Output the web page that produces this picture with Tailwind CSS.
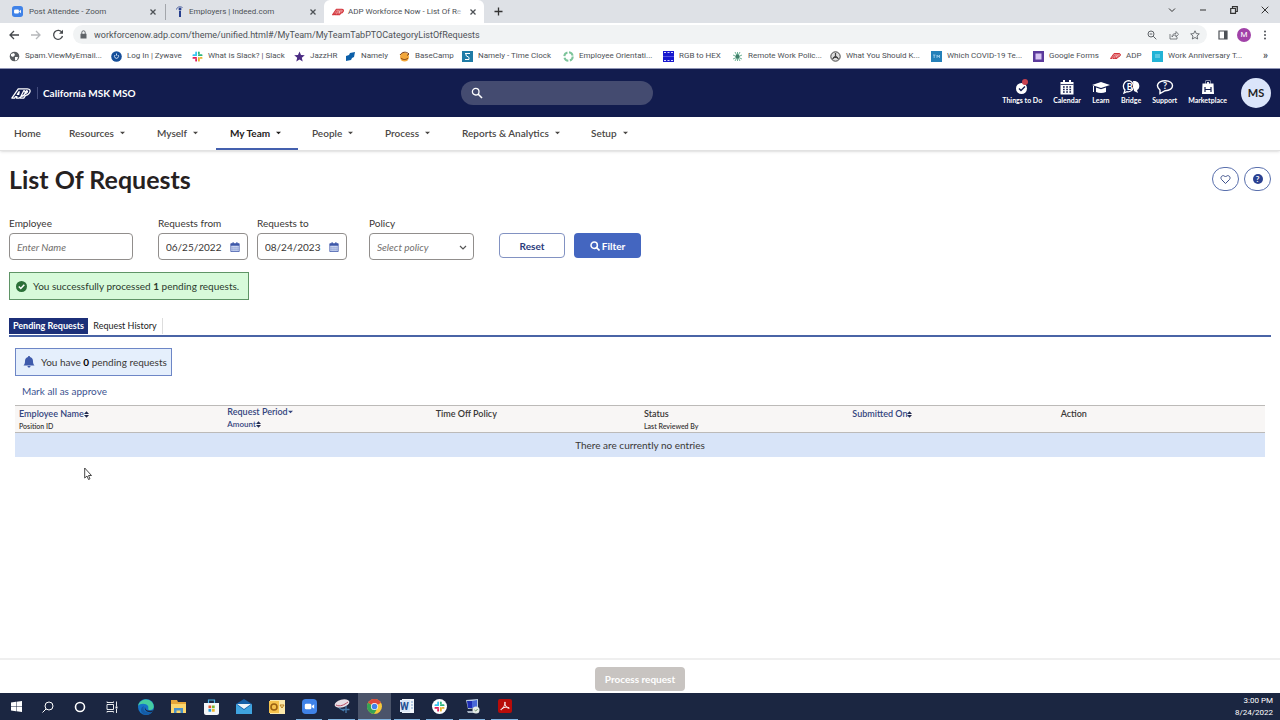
<!DOCTYPE html>
<html lang="en">
<head>
  <meta charset="UTF-8" />
  <meta name="viewport" content="width=device-width, initial-scale=1" />
  <title>ADP Workforce Now - List Of Requests</title>
  <script src="https://cdn.jsdelivr.net/npm/@tailwindcss/browser@4"></script>
</head>
<body class="min-h-screen flex flex-col bg-white font-['Lato',sans-serif] text-[10px] leading-3 text-[#3a3735]">

  <!-- Shared symbols -->
  <svg class="hidden">
    <symbol id="x" viewBox="0 0 8 8"><path d="M1.500 1.500l5 5M6.500 1.500l-5 5" stroke="currentColor" stroke-width="1.300" /></symbol>
    <symbol id="caret" viewBox="0 0 6 4"><path d="M0 .5h6L3 3.500z" fill="currentColor" /></symbol>
    <symbol id="sort" viewBox="0 0 6 8"><path d="M0 3.500L3 0l3 3.500zM0 4.500h6L3 8z" fill="#222a4d" /></symbol>
    <symbol id="adp" viewBox="0 0 22 12"><path d="M1 11L8 1h10c3 0 3.500 2 2.500 4s-2.500 3-4.500 3l-2 3h-4l1-1.500-2 1.500H6l.5-1.500H5L4 11zM7 7l2-3-.5 3zM11 9l3-6c3 0 1.500 6-3 6zM15.500 6l1.500-3c2 0 1 3-1.500 3z" fill="none" stroke="currentColor" stroke-width="1.400" stroke-linejoin="round" /></symbol>
    <symbol id="adpred" viewBox="0 0 22 12"><path d="M1 11L8 1h10c3 0 3.500 2 2.500 4s-2.500 3-4.500 3l-2 3h-4l1-1.500-2 1.500H6l.5-1.500H5L4 11z" fill="#e88488" stroke="#d3353c" stroke-width="2" stroke-linejoin="round" /><path d="M7 7l2-3-.5 3zM11 9l3-6c3 0 1.500 6-3 6z" fill="#fff" stroke="#d3353c" /></symbol>
    <symbol id="cal" viewBox="0 0 12 12"><path d="M1 2h10v9.500H1z" fill="#dfe7fa" stroke="#3d57a8" /><path d="M1 2h10v2.500H1zM3 .3h1.500v2H3zM7.500.3H9v2H7.500z" fill="#3d57a8" /><path d="M3.500 5v6M6 5v6M8.500 5v6M1.500 7h9M1.500 9.300h9" stroke="#7388c6" stroke-width=".6" /></symbol>
    <symbol id="zoomcam" viewBox="0 0 16 16"><rect width="16" height="16" rx="4" fill="#3f82e8" /><rect x="3" y="5" width="7" height="6" rx="1.500" fill="#fff" /><path d="M10.500 7.500L13 5.500v5l-2.500-2z" fill="#fff" /></symbol>
    <symbol id="slack" viewBox="0 0 12 12" fill="none"><g stroke-width="2" stroke-linecap="round"><path d="M4.500 1.500v3M1.500 4.500h1.500" stroke="#36c5f0" /><path d="M7.500 4.500h3M7.500 1.500v1" stroke="#2eb67d" /><path d="M7.500 7.500v3M9.500 7.500h1" stroke="#ecb22e" /><path d="M1.500 7.500h3M4.500 9.500v1" stroke="#e01e5a" /></g></symbol>
  </svg>

  <!-- Browser window -->
  <div class="font-['Roboto',sans-serif] text-[8px] text-[#4d5156]">
    <div class="h-[23px] bg-[#dee1e6] flex items-center">
      <div class="w-[162px] ml-1 pl-2 pr-1 flex items-center gap-1.5 border-r border-[#a3a6ab]">
        <svg class="size-[11px]"><use href="#zoomcam" /></svg>
        <span class="flex-1">Post Attendee - Zoom</span>
        <button aria-label="Close tab" class="size-4 flex items-center justify-center"><svg class="size-2"><use href="#x" /></svg></button>
      </div>
      <div class="w-[158px] pl-2 pr-[3px] flex items-center gap-1">
        <svg class="size-[11px]" viewBox="0 0 11 11"><circle cx="6" cy="3" r="1.500" fill="#27408f" /><path d="M5 5h2v6H5z" fill="#27408f" /><path d="M2.500 3.500C3 1 5.500 0 8.500 1.500" fill="none" stroke="#27408f" stroke-width=".8" /></svg>
        <span class="flex-1">Employers | Indeed.com</span>
        <button aria-label="Close tab" class="size-4 flex items-center justify-center"><svg class="size-2"><use href="#x" /></svg></button>
      </div>
      <div class="w-[160px] h-full pl-2 pr-[3px] bg-white rounded-t-md flex items-center gap-1">
        <svg class="w-3 h-2 shrink-0"><use href="#adpred" /></svg>
        <span class="flex-1 whitespace-nowrap">ADP Workforce Now - List Of R<span class="text-[#b8babd]">e</span></span>
        <button aria-label="Close tab" class="size-4 flex items-center justify-center"><svg class="size-2"><use href="#x" /></svg></button>
      </div>
      <button aria-label="New tab" class="ml-1.5 size-4 flex items-center justify-center"><svg class="size-[9px]" viewBox="0 0 9 9"><path d="M4.500 .5v8M.5 4.500h8" stroke="#333" stroke-width="1.300" /></svg></button>
      <div class="ml-auto pr-[11px] pb-1 flex items-center gap-[23px] text-[#333]">
        <svg class="size-2" viewBox="0 0 8 8"><path d="M1 2.500l3 3 3-3" fill="none" stroke="currentColor" /></svg>
        <svg class="size-2" viewBox="0 0 8 8"><path d="M1 4h6" stroke="currentColor" /></svg>
        <svg class="size-2" viewBox="0 0 8 8"><path d="M.7 2.500h4.800v4.800H.7zM2.500 2.300V.7h4.800v4.800H5.700" fill="none" stroke="currentColor" stroke-width="1.200" /></svg>
        <svg class="size-2" viewBox="0 0 8 8"><path d="M.7.7l6.600 6.600M7.300.7L.7 7.300" stroke="currentColor" /></svg>
      </div>
    </div>

    <div class="h-[23px] flex items-center pl-2 pr-3">
      <svg class="size-3" viewBox="0 0 12 12"><path d="M11 6H2M6 2L2 6l4 4" fill="none" stroke="#44474b" stroke-width="1.300" /></svg>
      <svg class="size-3 ml-2.5" viewBox="0 0 12 12"><path d="M1 6h9M6 2l4 4-4 4" fill="none" stroke="#b6b8bb" stroke-width="1.300" /></svg>
      <svg class="size-3 ml-2.5" viewBox="0 0 12 12"><path d="M10 3.500A4.500 4.500 0 1 0 10.500 7" fill="none" stroke="#44474b" stroke-width="1.300" /><path d="M11 .8v4H7z" fill="#44474b" /></svg>
      <div class="flex-1 h-[19px] ml-[9px] mr-[11px] pl-1.5 pr-[7px] rounded-full bg-[#f1f3f4] flex items-center">
        <svg class="size-[9px]" viewBox="0 0 9 9"><path d="M1.500 3.800h6V8.500h-6z" fill="#5f6368" /><path d="M2.800 4V2.500a1.700 1.700 0 0 1 3.400 0V4" fill="none" stroke="#5f6368" /></svg>
        <input aria-label="Address" value="workforcenow.adp.com/theme/unified.html#/MyTeam/MyTeamTabPTOCategoryListOfRequests" class="flex-1 ml-1.5 text-[9px] bg-transparent outline-none" />
        <svg class="size-[10px]" viewBox="0 0 10 10"><circle cx="4" cy="4" r="3" fill="none" stroke="#5f6368" /><path d="M6.200 6.200L9.300 9.300M2.700 4h2.600" stroke="#5f6368" /></svg>
        <svg class="size-[10px] ml-3" viewBox="0 0 10 10"><path d="M1 4v5h7V7M3 7c0-2.500 1.500-3.500 4-3.500V1.500L9.500 4.300 7 7V5C5 5 4 5.500 3 7z" fill="none" stroke="#5f6368" stroke-width=".8" /></svg>
        <svg class="size-[10px] ml-[11px]" viewBox="0 0 10 10"><path d="M5 .8l1.300 2.800 3 .3L7 6l.7 3L5 7.500 2.300 9 3 6 .7 3.900l3-.3z" fill="none" stroke="#5f6368" stroke-width=".9" /></svg>
      </div>
      <svg class="size-[10px]" viewBox="0 0 10 10"><path d="M1 1h8v8H1z" fill="none" stroke="#4d5156" stroke-width="1.200" /><path d="M6 1h3v8H6z" fill="#4d5156" /></svg>
      <span class="ml-[9px] size-[14px] rounded-full bg-[#a142a8] text-white flex items-center justify-center">M</span>
      <svg class="w-[6px] h-[10px] ml-[11px]" viewBox="0 0 6 10" fill="#4d5156"><circle cx="3" cy="1.500" r="1" /><circle cx="3" cy="5" r="1" /><circle cx="3" cy="8.500" r="1" /></svg>
    </div>

    <nav aria-label="Bookmarks" class="h-[23px] pl-[9px] pr-3 pb-0.5 flex items-center gap-3 whitespace-nowrap border-b border-[#8f94b5]">
      <a href="#" class="w-[90px] flex items-center gap-[5px]">
        <svg class="size-[11px] shrink-0" viewBox="0 0 11 11"><circle cx="5.500" cy="5.500" r="4.800" fill="#595d61" /><path d="M2 3l3-1 1 2-2 2-2-1zM6 6l3 0-1 3-2 .5z" fill="#fff" /></svg>Spam.ViewMyEmail...</a>
      <a href="#" class="w-[69px] flex items-center gap-[5px]">
        <svg class="size-[11px] shrink-0" viewBox="0 0 11 11"><circle cx="5.500" cy="5.500" r="5.300" fill="#154e99" /><path d="M4 4a2 2 0 1 0 3 0M5.500 2.500v2" fill="none" stroke="#d3e2f5" /></svg>Log In | Zywave</a>
      <a href="#" class="w-[90px] flex items-center gap-[5px]">
        <svg class="size-[11px] shrink-0"><use href="#slack" /></svg>What is Slack? | Slack</a>
      <a href="#" class="w-[39px] flex items-center gap-[5px]">
        <svg class="size-[11px] shrink-0" viewBox="0 0 11 11"><path d="M5.500.5L7 4l3.800.3-3 2.500.9 3.700-3.200-2-3.200 2 .9-3.700-3-2.500L4 4z" fill="#4b2c83" /></svg>JazzHR</a>
      <a href="#" class="w-[42px] flex items-center gap-[5px]">
        <svg class="size-[11px] shrink-0" viewBox="0 0 11 11"><path d="M1 5l3-1 1-2 5-1-1 5-2 1-1 2-5 1z" fill="#0c5fa8" /></svg>Namely</a>
      <a href="#" class="w-[51px] flex items-center gap-[5px]">
        <svg class="size-[11px] shrink-0" viewBox="0 0 11 11"><circle cx="5.500" cy="6" r="4.500" fill="#f3a73a" /><path d="M1 4c2-3 6-4 9-1L8 4.500M2 7c2 2 5 2 7 0" fill="none" stroke="#7c3d15" /></svg>BaseCamp</a>
      <a href="#" class="w-[89px] flex items-center gap-[5px]">
        <svg class="size-[11px] shrink-0" viewBox="0 0 11 11"><path d="M0 0h11v11H0z" fill="#1f7ba6" /><path d="M3 2.500h5M4 2.500v2l3 2v2H3" fill="none" stroke="#fff" /></svg>Namely - Time Clock</a>
      <a href="#" class="w-[88px] flex items-center gap-[5px]">
        <svg class="size-[11px] shrink-0" viewBox="0 0 11 11"><circle cx="5.500" cy="5.500" r="4.200" fill="none" stroke="#7cc49a" stroke-width="2" stroke-dasharray="5 1.600" /></svg>Employee Orientati...</a>
      <a href="#" class="w-[57px] flex items-center gap-[5px]">
        <svg class="size-[11px] shrink-0" viewBox="0 0 11 11"><path d="M0 0h11v11H0z" fill="#1818cf" /><path d="M1 1.500h2M4.500 1.500h2M8 1.500h2M1 9.500h2M4.500 9.500h2M8 9.500h2" stroke="#d4d4ff" /><path d="M0 5.500h11" stroke="#6f6fe8" stroke-width=".7" /></svg>RGB to HEX</a>
      <a href="#" class="w-[86px] flex items-center gap-[5px]">
        <svg class="size-[11px] shrink-0" viewBox="0 0 11 11"><path d="M5.500 1v9M1 4l9 4M10 4L1 8M3 1l5 9M8 1L3 10" stroke="#5fa98a" stroke-width=".9" /><circle cx="5.500" cy="5.500" r="2" fill="#3f7d69" /></svg>Remote Work Polic...</a>
      <a href="#" class="w-[89px] flex items-center gap-[5px]">
        <svg class="size-[11px] shrink-0" viewBox="0 0 11 11"><circle cx="5.500" cy="5.500" r="4.700" fill="#ddd" stroke="#444" /><path d="M5.500 2v3M2.500 8l3-3 3 3M3 6.500h5" fill="none" stroke="#444" stroke-width="1.200" /></svg>What You Should K...</a>
      <a href="#" class="w-[90px] flex items-center gap-[5px]">
        <svg class="size-[11px] shrink-0" viewBox="0 0 11 11"><path d="M0 0h11v11H0z" fill="#2480b9" /><path d="M2 4h2.500M3.200 4v3M6 7V4l1.200 2L8.500 4v3" fill="none" stroke="#a9d4ee" stroke-width=".8" /></svg>Which COVID-19 Te...</a>
      <a href="#" class="w-[65px] flex items-center gap-[5px]">
        <svg class="size-[11px] shrink-0" viewBox="0 0 11 11"><path d="M0 0h11v11H0z" fill="#5b3a9c" /><path d="M2.500 2.500h6v6h-6z" fill="#d8c5f3" /></svg>Google Forms</a>
      <a href="#" class="w-[30px] flex items-center gap-[5px]">
        <svg class="w-[11px] h-2 shrink-0"><use href="#adpred" /></svg>ADP</a>
      <a href="#" class="w-[90px] flex items-center gap-[5px]">
        <svg class="size-[11px] shrink-0" viewBox="0 0 11 11"><path d="M0 0h11v11H0z" fill="#22b3d6" /><path d="M3 4h5M3 6h5" stroke="#bdeaf5" stroke-width=".8" /></svg>Work Anniversary T...</a>
      <span class="ml-auto text-[10px] font-bold">»</span>
    </nav>
  </div>

  <!-- ADP header -->
  <header class="h-12 bg-[#121c4e] text-white flex items-center pl-2.5 pr-[9px]">
    <div class="w-[451px] flex items-center">
      <svg class="w-[22px] h-[11px]"><use href="#adp" /></svg>
      <div class="ml-[5px] pl-[5px] border-l border-[#424b7c] font-bold">California MSK MSO</div>
    </div>
    <div class="w-48 h-6 pl-2.5 rounded-full bg-[#444b70] flex items-center">
      <svg class="size-3" viewBox="0 0 12 12"><circle cx="4.700" cy="4.700" r="3.300" fill="none" stroke="#fff" stroke-width="1.300" /><path d="M7 7l4 4" stroke="#fff" stroke-width="1.600" /></svg>
      <input aria-label="Search" class="flex-1 min-w-0 px-2 bg-transparent outline-none" />
    </div>
    <div class="ml-auto flex items-center gap-3.5">
      <div class="pb-1 flex gap-[11px] text-[7px] leading-[8px] font-bold">
        <button class="flex flex-col items-center gap-px">
          <svg class="size-4" viewBox="0 0 16 16"><circle cx="7.500" cy="9.500" r="5.500" fill="#fff" /><path d="M5 9.500l2 2 4-4" fill="none" stroke="#121c4e" stroke-width="1.400" /><circle cx="11" cy="3" r="3" fill="#c8414f" /></svg>Things to Do</button>
        <button class="flex flex-col items-center gap-px">
          <svg class="size-4" viewBox="0 0 16 16"><path d="M1.500 3h13v12.500h-13zM4 1h2v3H4zM10 1h2v3h-2z" fill="#fff" /><path d="M1.500 5.500h13" stroke="#121c4e" stroke-width=".8" /><path d="M4 8h8.500M4 10.500h8.500M4 13h8.500" stroke="#121c4e" stroke-width="1.300" stroke-dasharray="1.700 1.500" /></svg>Calendar</button>
        <button class="flex flex-col items-center gap-px">
          <svg class="w-[18px] h-4" viewBox="0 0 18 16"><path d="M9 3l9 3-9 3-9-3zM4 8.500l5 1.700 5-1.700V13c-3 1.300-7 1.300-10 0zM1 7h1v6H1z" fill="#fff" /></svg>Learn</button>
        <button class="flex flex-col items-center gap-px">
          <svg class="w-[18px] h-4" viewBox="0 0 18 16"><path d="M11 2c7-1 8 7 4 9l1 3-4-2z" fill="#fff" /><path d="M7 1.700a5.500 5.500 0 1 1-2 11L2 14l1-3A5.500 5.500 0 0 1 7 1.700z" fill="#121c4e" stroke="#fff" stroke-width="1.300" /><text x="4.700" y="10.500" font-size="9" font-weight="bold" fill="#fff">B</text></svg>Bridge</button>
        <button class="flex flex-col items-center gap-px">
          <svg class="w-[18px] h-4" viewBox="0 0 18 16"><path d="M9 1.700c10 0 10 10 0 10L4 14.500V11C-1 7 2 1.700 9 1.700z" fill="none" stroke="#fff" stroke-width="1.400" /><text x="7" y="10" font-size="9" font-weight="bold" fill="#fff">?</text></svg>Support</button>
        <button class="flex flex-col items-center gap-px">
          <svg class="size-4" viewBox="0 0 16 16"><path d="M2.500 4.500h11l.5 10.500H2zM5.500 5V1.500h5V5" fill="#fff" /><path d="M6.500 4.500v-2h3v2M5 8v5M11 8v5M5 10.500h6" fill="none" stroke="#121c4e" stroke-width="1.200" /></svg>Marketplace</button>
      </div>
      <button class="size-[30px] rounded-full bg-[#dbe5fa] text-[#222] text-[11px] font-bold">MS</button>
    </div>
  </header>

  <nav aria-label="Main" class="h-[34px] flex border-b border-[#e2e2e2] shadow-sm text-[#4a4745] font-semibold *:pl-3.5 *:flex *:items-center *:gap-1.5 *:border-b-2 *:border-transparent">
    <a href="#" class="w-[55px]">Home</a>
    <a href="#" class="w-[88px]">Resources <svg class="w-[5px] h-1"><use href="#caret" /></svg></a>
    <a href="#" class="w-[73px]">Myself <svg class="w-[5px] h-1"><use href="#caret" /></svg></a>
    <a href="#" class="w-[82px] border-[#4460ae]! text-[#1f1d1c] font-bold">My Team <svg class="w-[5px] h-1"><use href="#caret" /></svg></a>
    <a href="#" class="w-[73px]">People <svg class="w-[5px] h-1"><use href="#caret" /></svg></a>
    <a href="#" class="w-[77px]">Process <svg class="w-[5px] h-1"><use href="#caret" /></svg></a>
    <a href="#" class="w-[129px]">Reports &amp; Analytics <svg class="w-[5px] h-1"><use href="#caret" /></svg></a>
    <a href="#" class="w-[65px]">Setup <svg class="w-[5px] h-1"><use href="#caret" /></svg></a>
  </nav>

  <main class="flex-1 px-[9px] pt-3">
    <div class="flex items-center justify-between">
      <h1 class="text-[25px] leading-8 font-bold text-[#26211f]">List Of Requests</h1>
      <div class="flex gap-[5px]">
        <button aria-label="Favorite" class="w-[27px] h-6 rounded-full border border-[#5a70ad] flex items-center justify-center"><svg class="size-[11px]" viewBox="0 0 11 11"><path d="M5.500 9.500L1.500 5.500C-.5 2.500 3.500 0 5.500 3c2-3 6-.5 4 2.500z" fill="none" stroke="#3d4f8a" /></svg></button>
        <button aria-label="Help" class="w-[27px] h-6 rounded-full border border-[#5a70ad] flex items-center justify-center"><span class="size-[10px] rounded-full bg-[#2b4191] text-white text-[8px] leading-[10px] font-bold">?</span></button>
      </div>
    </div>

    <!-- Filters -->
    <form class="mt-[22px] flex items-end">
      <div class="flex flex-col gap-1">
        <label for="employee">Employee</label>
        <input id="employee" placeholder="Enter Name" class="w-[124px] h-[27px] px-[7px] rounded border border-[#918e8c] placeholder:italic placeholder:text-[#726f6d]" />
      </div>
      <div class="ml-[25px] flex flex-col gap-1">
        <label for="from">Requests from</label>
        <div class="w-[90px] h-[27px] px-[7px] rounded border border-[#918e8c] flex items-center">
          <input id="from" value="06/25/2022" class="flex-1 min-w-0 outline-none" />
          <button type="button" aria-label="Pick start date"><svg class="size-[10px]"><use href="#cal" /></svg></button>
        </div>
      </div>
      <div class="ml-[9px] flex flex-col gap-1">
        <label for="to">Requests to</label>
        <div class="w-[90px] h-[27px] px-[7px] rounded border border-[#918e8c] flex items-center">
          <input id="to" value="08/24/2023" class="flex-1 min-w-0 outline-none" />
          <button type="button" aria-label="Pick end date"><svg class="size-[10px]"><use href="#cal" /></svg></button>
        </div>
      </div>
      <div class="ml-[22px] flex flex-col gap-1">
        <label for="policy">Policy</label>
        <div class="relative">
          <select id="policy" class="w-[105px] h-[27px] px-[7px] appearance-none rounded border border-[#918e8c] italic text-[#726f6d]">
            <option>Select policy</option>
          </select>
          <svg class="absolute right-[7px] top-[11px] size-2 pointer-events-none" viewBox="0 0 8 8"><path d="M1 2l3 3 3-3" fill="none" stroke="#555" stroke-width="1.200" /></svg>
        </div>
      </div>
      <button type="reset" class="ml-[25px] mb-0.5 w-[66px] h-[25px] rounded border border-[#8292c2] text-[#2b3c7c] font-bold">Reset</button>
      <button type="button" class="ml-[9px] mb-0.5 w-[67px] h-[25px] rounded bg-[#4466c0] text-white font-bold flex items-center justify-center gap-0.5"><svg class="size-[10px]" viewBox="0 0 10 10"><circle cx="4.200" cy="4.200" r="3.200" fill="none" stroke="#fff" stroke-width="1.500" /><path d="M6.500 6.500l3 3" stroke="#fff" stroke-width="1.700" /></svg>Filter</button>
    </form>

    <div role="status" class="mt-3 w-60 h-7 px-1.5 border border-[#5f9466] bg-[#d7fada] flex items-center gap-1.5 whitespace-nowrap text-[#2c3a2e]">
      <svg class="size-[11px]" viewBox="0 0 11 11"><circle cx="5.500" cy="5.500" r="5.500" fill="#2b7038" /><path d="M2.800 5.500l2 2 3.500-3.700" fill="none" stroke="#fff" stroke-width="1.500" /></svg>
      <span>You successfully processed <b>1</b> pending requests.</span>
    </div>

    <!-- Tabs -->
    <div role="tablist" class="mt-[18px] flex border-b-2 border-[#4a64a6] pb-px text-[9px]">
      <button role="tab" aria-selected="true" class="w-[79px] h-4 bg-[#1c2f78] text-white font-bold">Pending Requests</button>
      <button role="tab" class="w-[75px] h-4 border-r border-[#ddd] text-[#222]">Request History</button>
    </div>

    <section class="px-1.5 pt-[11px]">
      <div class="w-[157px] h-7 pl-[7px] border border-[#6d86c6] bg-[#e5effc] flex items-center gap-1.5 whitespace-nowrap">
        <svg class="size-3" viewBox="0 0 12 12"><path d="M6 0c.8 0 1 .6 1 1 2.500.7 3 2.500 3 4.500 0 2 .7 3 1.500 4H.5C1.300 8.500 2 7.500 2 5.500 2 3.500 2.500 1.700 5 1c0-.4.200-1 1-1zM4.500 10h3c0 2-3 2-3 0z" fill="#3e5aab" /></svg>
        <span>You have <b class="text-black">0</b> pending requests</span>
      </div>
      <a href="#" class="mt-[9px] ml-[7px] block w-fit text-[#3c5390]">Mark all as approve</a>

      <table class="mt-2 w-full table-fixed text-left">
        <thead class="bg-[#f8f6f5] border-y border-[#bcbab8] text-[9px] leading-3">
          <tr class="h-[26px] *:px-1 *:pt-0.5 *:align-top *:font-semibold">
            <th><a href="#" class="flex items-center text-[#34457e]">Employee Name<svg class="w-[5px] h-[7px]"><use href="#sort" /></svg></a><div class="text-[7px] leading-3">Position ID</div></th>
            <th class="pt-0!"><a href="#" class="flex items-center text-[#34457e]">Request Period<svg class="w-[5px] h-1"><use href="#caret" /></svg></a><a href="#" class="flex items-center text-[8px] leading-3 text-[#34457e]">Amount<svg class="w-[5px] h-[7px]"><use href="#sort" /></svg></a></th>
            <th>Time Off Policy</th>
            <th>Status<div class="text-[7px] leading-3">Last Reviewed By</div></th>
            <th><a href="#" class="flex items-center text-[#34457e]">Submitted On<svg class="w-[5px] h-[7px]"><use href="#sort" /></svg></a></th>
            <th>Action</th>
          </tr>
        </thead>
        <tbody>
          <tr class="h-6 bg-[#d8e4f8] text-center"><td colspan="6">There are currently no entries</td></tr>
        </tbody>
      </table>
    </section>
  </main>

  <footer class="h-[35px] pt-1 border-t-2 border-[#efefef] flex items-center justify-center">
    <button disabled class="w-[90px] h-6 rounded bg-[#c8c4c1] text-white font-bold">Process request</button>
  </footer>

  <!-- Windows taskbar -->
  <div class="h-[27px] bg-[#1b2641] flex text-white font-['Roboto',sans-serif]">
    <div class="flex *:w-8 *:flex *:items-center *:justify-center">
      <button aria-label="Start"><svg class="size-[11px]" viewBox="0 0 11 11"><path d="M0 1.500l5-.7V5H0zM5.500.7L11 0v5H5.500zM0 5.500h5v4.700l-5-.7zM5.500 5.500H11V11l-5.500-.8z" fill="#fff" /></svg></button>
      <button aria-label="Search"><svg class="size-3" viewBox="0 0 12 12"><circle cx="7" cy="5" r="4" fill="none" stroke="#fff" /><path d="M4 8l-3.500 3.500" stroke="#fff" /></svg></button>
      <button aria-label="Cortana"><svg class="size-3" viewBox="0 0 12 12"><circle cx="6" cy="6" r="4.500" fill="none" stroke="#fff" stroke-width="1.600" /></svg></button>
      <button aria-label="Task view"><svg class="size-3" viewBox="0 0 12 12"><path d="M1 3.500h6.500v5H1zM1 .5v1h6.500v-1M1 11.500v-1h6.500v1M10.500.5v5M10.500 8v4" fill="none" stroke="#fff" stroke-width=".9" /><path d="M9.500 5.500h2v2h-2z" fill="#fff" /></svg></button>
    </div>
    <div class="ml-0.5 w-[391px] flex *:w-1/12 *:flex *:items-center *:justify-center">
      <button aria-label="Edge"><svg class="size-4" viewBox="0 0 16 16"><circle cx="8" cy="8" r="8" fill="#1673c8" /><path d="M0 7C1 1 9-2 14 3c3 4 2 8-2 8-3 0-1-2-2-4C8 4 2 4 0 7z" fill="#45cda1" /><path d="M6 7c-2 4 2 8 8 6-2 3-7 4-10 1-2-3-1-6 2-7z" fill="#155ba6" /><path d="M7 8c0 3 3 4.500 7 3.500l1.500 0L14 13c-5 1-8-2-7-5z" fill="#1b2641" /></svg></button>
      <button aria-label="File Explorer"><svg class="w-[15px] h-[13px]" viewBox="0 0 15 13"><path d="M0 0h6l1 2h8v11H0z" fill="#e6a73a" /><path d="M0 4h15v9H0z" fill="#fbd66d" /><path d="M3 13V8h9v5h-2.500v-2.500h-4V13z" fill="#4b91c8" /></svg></button>
      <button aria-label="Store"><svg class="w-[15px] h-4" viewBox="0 0 15 16"><path d="M0 4h15v10c0 1-1 2-2 2H2c-1 0-2-1-2-2z" fill="#f4f7f9" /><path d="M4.500 4V1h6v3" fill="none" stroke="#4cb5e8" stroke-width="1.200" /><path d="M4.500 6.500h2.700v2.700H4.500z" fill="#e3542c" /><path d="M8 6.500h2.700v2.700H8z" fill="#79b62f" /><path d="M4.500 10h2.700v2.700H4.500z" fill="#2599d8" /><path d="M8 10h2.700v2.700H8z" fill="#f3b724" /></svg></button>
      <button aria-label="Mail"><svg class="w-4 h-[15px]" viewBox="0 0 16 15"><path d="M0 5l8-5 8 5v10H0z" fill="#1660a7" /><path d="M1 5h14L8 10z" fill="#eef5fa" /><path d="M0 5l8 6 8-6v10H0z" fill="#3fa3df" /></svg></button>
      <button aria-label="Outlook"><svg class="w-4 h-[14px]" viewBox="0 0 16 14"><path d="M1 0h15v14H1z" fill="#fbe8ab" /><path d="M0 1h10v12H0z" fill="#f5c24d" /><circle cx="5" cy="7" r="3" fill="none" stroke="#9c6112" stroke-width="1.600" /><path d="M11 5h4l-2 3z" fill="none" stroke="#b88020" /></svg></button>
      <button aria-label="Zoom" class="px-[3px]"><span class="h-full w-full border-b border-[#82b4e0] flex items-center justify-center"><svg class="size-[15px]"><use href="#zoomcam" /></svg></span></button>
      <button aria-label="Snip" class="px-[3px]"><span class="h-full w-full border-b border-[#82b4e0] flex items-center justify-center"><svg class="size-4" viewBox="0 0 16 16"><ellipse cx="8" cy="5.500" rx="7.500" ry="4" transform="rotate(-15 8 5.500)" fill="#e8dfe5" /><path d="M2 7c4 2 8 0 12-3" fill="none" stroke="#b74b63" /><path d="M12 8v7M8.500 11.500h7M5 10l5 3" stroke="#4579ab" stroke-width="1.300" /></svg></span></button>
      <button aria-label="Chrome" class="bg-[#4b546a]"><span class="h-full w-full border-b border-[#82b4e0] flex items-center justify-center"><svg class="size-[15px]" viewBox="0 0 16 16"><circle cx="8" cy="8" r="8" fill="#f7c93b" /><path d="M8 8L1 4a8 8 0 0 1 14 0z" fill="#dd4b3e" /><path d="M8 8L1 4a8 8 0 0 0 6.500 12L11 10z" fill="#36a455" /><circle cx="8" cy="8" r="3.800" fill="#fff" /><circle cx="8" cy="8" r="3" fill="#4283ec" /></svg></span></button>
      <button aria-label="Word" class="px-[3px]"><span class="h-full w-full border-b border-[#82b4e0] flex items-center justify-center"><svg class="size-[14px]" viewBox="0 0 14 14"><path d="M2 0h12v14H2z" fill="#f2f6fb" /><path d="M11 3h2M11 6h2M11 9h2" stroke="#7ba2d1" /><path d="M0 1h10v12H0z" fill="#dbe7f6" /><text x="0" y="10.500" font-size="10" font-weight="bold" fill="#224f93">W</text></svg></span></button>
      <button aria-label="Slack" class="px-[3px]"><span class="h-full w-full border-b border-[#82b4e0] flex items-center justify-center"><span class="size-[15px] rounded-full bg-white flex items-center justify-center"><svg class="size-[11px]"><use href="#slack" /></svg></span></span></button>
      <button aria-label="Remote Desktop" class="px-[3px]"><span class="h-full w-full border-b border-[#82b4e0] flex items-center justify-center"><svg class="size-[15px]" viewBox="0 0 15 15"><path d="M1 1l12-1v9L3 10z" fill="#b8cbe1" /><path d="M2 2l5 0v7l-4 0z" fill="#1e2db4" /><path d="M7 2l5-1v7l-5 1z" fill="#4868d7" /><path d="M2 12h9l3 2H3z" fill="#a8b3c2" /><circle cx="11" cy="11" r="3.500" fill="#e5ebe5" /><path d="M9.500 11l1.200 1 2-2" fill="none" stroke="#698d66" /></svg></span></button>
      <button aria-label="Acrobat" class="px-[3px]"><span class="h-full w-full border-b border-[#82b4e0] flex items-center justify-center"><svg class="size-[14px]" viewBox="0 0 14 14"><rect width="14" height="14" rx="2" fill="#b80c09" /><path d="M7 3c-1 0 0 3 1.500 5 2 2 3.500 1.500 2.500.7C9 7.500 5 8.500 3.500 9.800 2 11 3.500 11.500 5 9 6.500 6.500 8 3 7 3z" fill="none" stroke="#fff" stroke-width=".9" /></svg></span></button>
    </div>
    <div class="ml-auto pr-[7px] flex flex-col items-end justify-center text-[8px] leading-3"><span>3:00 PM</span><span>8/24/2022</span></div>
  </div>

  <!-- Mouse pointer -->
  <svg class="absolute left-[84px] top-[467px] w-2 h-3.5" viewBox="0 0 8 14"><path d="M.7 1v10l2.300-2 1.500 3.500 1.500-.7L4.500 8.500h3z" fill="#fff" stroke="#333" stroke-width=".9" /></svg>

</body>
</html>
